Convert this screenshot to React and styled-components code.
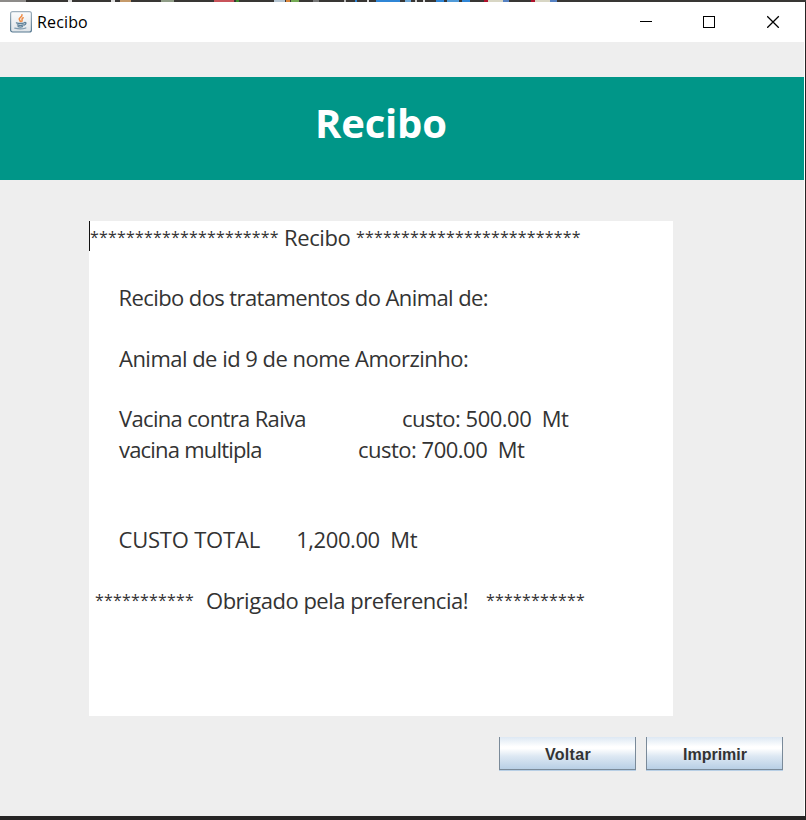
import React from 'react';
import styled, { createGlobalStyle } from 'styled-components';

const GlobalStyle = createGlobalStyle`
  * { box-sizing: border-box; }
  body { margin: 0; overflow: hidden; background: #262424; }
`;

const Desktop = styled.div`
  width: 806px;
  height: 820px;
  background: #262424;
  font-family: "Open Sans", "Noto Sans", sans-serif;
`;

const Backdrop = styled.div`
  display: flex;
  height: 2px;
  background: #383634;
`;

const Fleck = styled.i`
  flex: none;
  width: ${(p) => p.$w}px;
  margin-left: ${(p) => p.$gap}px;
  background: ${(p) => p.$color};
`;

const Window = styled.main`
  display: flex;
  flex-direction: column;
  width: 805px;
  height: 814px;
  border-right: 1px solid #fff;
  background: #eeeeee;
`;

const TitleBar = styled.header`
  display: flex;
  align-items: center;
  height: 40px;
  padding-left: 10px;
  background: #fff;
`;

const JavaIcon = styled.svg`
  flex: none;
  width: 22px;
  height: 22px;
  margin-bottom: 1px;
`;

const Caption = styled.span`
  flex: 1;
  margin-left: 5px;
  font-size: 16px;
  letter-spacing: 0.15px;
  line-height: 24px;
  color: #000;
`;

const Controls = styled.div`
  display: flex;
  gap: 51px;
  margin: 0 24px 1px 0;
`;

const ControlIcon = styled.svg`
  width: 13px;
  height: 13px;
  fill: none;
  stroke: #000;
  stroke-width: ${(p) => p.$weight || 1};
`;

const Banner = styled.section`
  height: 103px;
  margin-top: 35px;
  padding: 22px 0 0 315px;
  background: #009688;
`;

const Heading = styled.h1`
  margin: 0;
  font-size: 40px;
  font-weight: 700;
  line-height: 48px;
  letter-spacing: -0.2px;
  color: #fff;
`;

const Receipt = styled.section`
  width: 584px;
  height: 495px;
  margin: 41px 0 0 89px;
  background: #fff;
  color: #333;
`;

const Line = styled.div`
  display: flex;
  height: 30.25px;
  padding-left: ${(p) => p.$indent || 0}px;
  border-left: 1px solid ${(p) => (p.$caret ? '#111' : 'transparent')};
`;

const Words = styled.span`
  flex: none;
  width: ${(p) => p.$w}px;
  padding-top: 0.75px;
  font-size: 22px;
  line-height: 30px;
  letter-spacing: ${(p) => p.$track}px;
  white-space: pre;
`;

const Stars = styled.span`
  flex: none;
  width: ${(p) => p.$w}px;
  padding-top: 0.5px;
  font-size: 16px;
  line-height: 30px;
  letter-spacing: 0.18px;
  white-space: pre;
`;

const Actions = styled.footer`
  display: flex;
  justify-content: flex-end;
  gap: 10px;
  margin: 21px 21px 0 0;
`;

const Button = styled.button`
  width: 137px;
  height: 33px;
  padding: 3px 0 0 1px;
  border: solid #7a8a99;
  border-width: 0 1px 1px;
  border-radius: 0;
  background: linear-gradient(#dde8f3 0%, #ffffff 30%, #ffffff 36%, #dde8f3 60%, #b8cfe5 100%);
  box-shadow: 0 1px 0 #b8cfe5;
  font: bold 16px "Liberation Sans", sans-serif;
  letter-spacing: ${(p) => p.$track}px;
  color: #333;
`;

const flecks = [
  [0, 26, '#8d8b89'], [42, 4, '#ddd'], [39, 4, '#ddd'], [5, 11, '#c59a6a'],
  [30, 13, '#8f9c86'], [40, 20, '#c8535a'], [2, 3, '#3c8b2c'],
  [35, 11, '#b5c5d2'], [1, 4, '#d8843a'], [1, 8, '#74aa55'],
  [14, 6, '#777'], [25, 2, '#bbb'], [9, 2, '#2f86d6'], [10, 2, '#ddd'],
  [7, 24, '#2f86d6'], [5, 6, '#6fa9d8'], [4, 2, '#ccc'], [6, 2, '#ddd'],
  [11, 8, '#2f86d6'], [3, 12, '#519bd9'], [3, 8, '#2f86d6'],
  [14, 4, '#b0102c'], [0, 15, '#d8d6c4'], [0, 6, '#5681c2'],
  [22, 4, '#b0102c'], [0, 15, '#d8d6c4'], [0, 7, '#5681c2'],
];

export default function App() {
  return (
    <Desktop>
      <GlobalStyle />
      <Backdrop>
        {flecks.map(([gap, w, color], i) => (
          <Fleck key={i} $gap={gap} $w={w} $color={color} />
        ))}
      </Backdrop>
      <Window>
        <TitleBar>
          <JavaIcon viewBox="0 0 22 22">
            <defs>
              <linearGradient id="tile" x1="0" y1="0" x2="0" y2="1">
                <stop offset="0" stopColor="#fbfcfd" />
                <stop offset="1" stopColor="#dfe4e8" />
              </linearGradient>
              <linearGradient id="edge" x1="0" y1="0" x2="0" y2="1">
                <stop offset="0" stopColor="#9fb0bd" />
                <stop offset="1" stopColor="#557890" />
              </linearGradient>
            </defs>
            <rect x="0.6" y="0.6" width="20.8" height="20.4" rx="2" fill="url(#tile)" stroke="url(#edge)" strokeWidth="1.2" />
            <g fill="none" strokeLinecap="round">
              <path d="M12 3.8c.6 2.2-3.3 2.7-2.8 4.4.2.9 1 1.3 1.1 2.3M13.2 6.8c-2.3.9-.5 2.1-1.4 3.7" stroke="#ee8a43" strokeWidth="1.5" />
              <path d="M6.4 11.8c2.2.7 5.8.7 7.9 0M7.4 13.9c1.8.6 4.2.6 6 0M8 15.6c1.4.5 3.2.5 4.6 0M14.4 11.5c2.2-.4 2 1.9-.3 2.6" stroke="#5e8199" strokeWidth="1.25" />
              <path d="M4.8 17.2c3.3.9 8.2.8 11-.2" stroke="#7f9baf" strokeWidth="1.3" />
            </g>
          </JavaIcon>
          <Caption>Recibo</Caption>
          <Controls>
            <ControlIcon viewBox="0 0 13 13" shapeRendering="crispEdges"><path d="M1 6.5h12" /></ControlIcon>
            <ControlIcon viewBox="0 0 13 13" shapeRendering="crispEdges"><rect x="0.5" y="1.5" width="11" height="11" /></ControlIcon>
            <ControlIcon viewBox="0 0 13 13" $weight={1.3}><path d="M.2 1.2l11.6 11.6M11.8 1.2L.2 12.8" /></ControlIcon>
          </Controls>
        </TitleBar>
        <Banner>
          <Heading>Recibo</Heading>
        </Banner>
        <Receipt>
          <Line $caret>
            <Stars $w={194}>*********************</Stars>
            <Words $w={72} $track={-0.4}>Recibo</Words>
            <Stars $w={226}>*************************</Stars>
          </Line>
          <Line />
          <Line $indent={28.5}><Words $w={380} $track={-0.59}>Recibo dos tratamentos do Animal de:</Words></Line>
          <Line />
          <Line $indent={29}><Words $w={380} $track={-0.52}>Animal de id 9 de nome Amorzinho:</Words></Line>
          <Line />
          <Line $indent={29}>
            <Words $w={283} $track={-0.66}>Vacina contra Raiva</Words>
            <Words $w={170} $track={-0.5}>custo: 500.00  Mt</Words>
          </Line>
          <Line $indent={29}>
            <Words $w={239} $track={-0.8}>vacina multipla</Words>
            <Words $w={170} $track={-0.5}>custo: 700.00  Mt</Words>
          </Line>
          <Line />
          <Line />
          <Line $indent={28.5}>
            <Words $w={177.7} $track={-0.2}>CUSTO TOTAL</Words>
            <Words $w={124} $track={-0.42}>1,200.00  Mt</Words>
          </Line>
          <Line />
          <Line $indent={5}>
            <Stars $w={111}>***********</Stars>
            <Words $w={280} $track={-0.48}>Obrigado pela preferencia!</Words>
            <Stars $w={100}>***********</Stars>
          </Line>
        </Receipt>
        <Actions>
          <Button $track={0.3}>Voltar</Button>
          <Button $track={0}>Imprimir</Button>
        </Actions>
      </Window>
    </Desktop>
  );
}
